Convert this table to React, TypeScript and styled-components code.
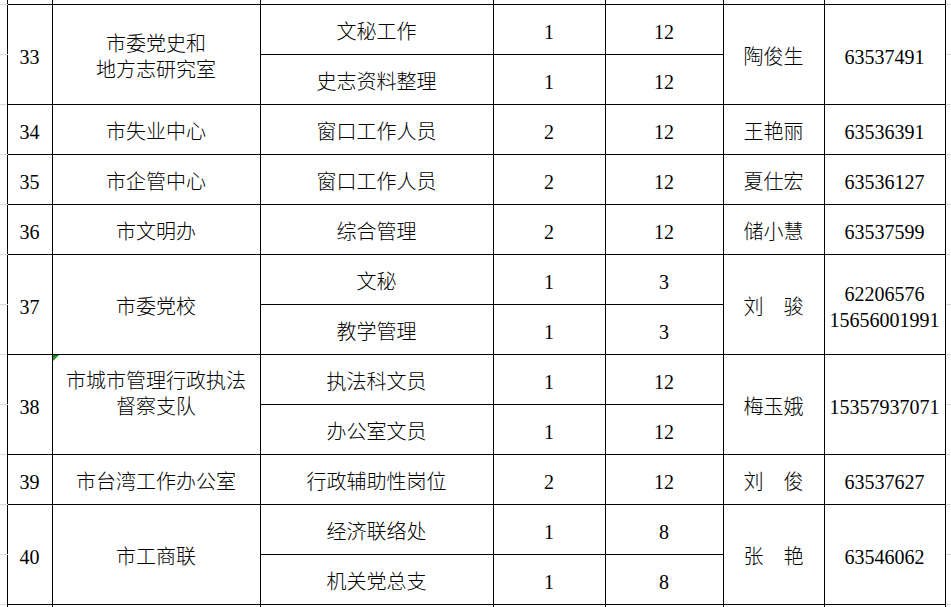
import { Fragment } from "react";
import styled, { createGlobalStyle } from "styled-components";

const GlobalStyle = createGlobalStyle`
  html, body {
    margin: 0;
    padding: 0;
    background: #fff;
    overflow: hidden;
  }
`;

const Sheet = styled.div`
  width: 951px;
  height: 607px;
  overflow: hidden;
  background: #fff;
`;

const Table = styled.table`
  border-collapse: collapse;
  table-layout: fixed;
  width: 960px;
  margin-top: -46px;
  font-family: "Liberation Serif", "Noto Sans CJK SC", serif;
  font-size: 20px;
  font-weight: 300;
  color: #000;
`;

const Row = styled.tr`
  height: 50px;
`;

const Cell = styled.td`
  position: relative;
  border: 1px solid #000;
  padding: 4px 0 0;
  text-align: center;
  vertical-align: middle;
  white-space: nowrap;
  line-height: 26px;
  height: 49px;
  box-sizing: border-box;
`;

const GridCell = styled.td`
  border-bottom: 1px solid #d9d9d9;
  padding: 0;
`;

const Flag = styled.span`
  position: absolute;
  left: 0;
  top: 0;
  width: 0;
  height: 0;
  border-top: 6px solid #1e8c1e;
  border-right: 6px solid transparent;
`;

const Line = styled.div`
  display: block;
  min-height: 26px;
`;

type Job = [string, number, number];

type Group = {
  no: string;
  unit: string[];
  jobs: Job[];
  contact: string;
  phone: string[];
  flag?: boolean;
};

const groups: Group[] = [
  {
    no: "33",
    unit: ["市委党史和", "地方志研究室"],
    jobs: [
      ["文秘工作", 1, 12],
      ["史志资料整理", 1, 12],
    ],
    contact: "陶俊生",
    phone: ["63537491"],
  },
  { no: "34", unit: ["市失业中心"], jobs: [["窗口工作人员", 2, 12]], contact: "王艳丽", phone: ["63536391"] },
  { no: "35", unit: ["市企管中心"], jobs: [["窗口工作人员", 2, 12]], contact: "夏仕宏", phone: ["63536127"] },
  { no: "36", unit: ["市文明办"], jobs: [["综合管理", 2, 12]], contact: "储小慧", phone: ["63537599"] },
  {
    no: "37",
    unit: ["市委党校"],
    jobs: [
      ["文秘", 1, 3],
      ["教学管理", 1, 3],
    ],
    contact: "刘　骏",
    phone: ["62206576", "15656001991"],
  },
  {
    no: "38",
    // the source cell ends with a blank line, which pushes its text up
    unit: ["市城市管理行政执法", "督察支队", ""],
    jobs: [
      ["执法科文员", 1, 12],
      ["办公室文员", 1, 12],
    ],
    contact: "梅玉娥",
    phone: ["15357937071"],
    flag: true,
  },
  { no: "39", unit: ["市台湾工作办公室"], jobs: [["行政辅助性岗位", 2, 12]], contact: "刘　俊", phone: ["63537627"] },
  {
    no: "40",
    unit: ["市工商联"],
    jobs: [
      ["经济联络处", 1, 8],
      ["机关党总支", 1, 8],
    ],
    contact: "张　艳",
    phone: ["63546062"],
  },
];

const widths = [7, 45, 208, 233, 112, 118, 101, 121, 15];

function EmptyRow() {
  return (
    <Row>
      <GridCell />
      {Array.from({ length: 7 }).map((_, i) => (
        <Cell key={i} />
      ))}
      <GridCell />
    </Row>
  );
}

export default function App() {
  return (
    <Sheet>
      <GlobalStyle />
      <Table>
        <colgroup>
          {widths.map((w, i) => (
            <col key={i} style={{ width: w }} />
          ))}
        </colgroup>
        <tbody>
          <EmptyRow />
          {groups.map((g) => (
            <Fragment key={g.no}>
              {g.jobs.map((job, j) => (
                <Row key={j}>
                  <GridCell />
                  {j === 0 && (
                    <>
                      <Cell rowSpan={g.jobs.length}>{g.no}</Cell>
                      <Cell rowSpan={g.jobs.length}>
                        {g.flag && <Flag />}
                        {g.unit.map((u, k) => (
                          <Line key={k}>{u}</Line>
                        ))}
                      </Cell>
                    </>
                  )}
                  <Cell>{job[0]}</Cell>
                  <Cell>{job[1]}</Cell>
                  <Cell>{job[2]}</Cell>
                  {j === 0 && (
                    <>
                      <Cell rowSpan={g.jobs.length}>{g.contact}</Cell>
                      <Cell rowSpan={g.jobs.length}>
                        {g.phone.map((p) => (
                          <Line key={p}>{p}</Line>
                        ))}
                      </Cell>
                    </>
                  )}
                  <GridCell />
                </Row>
              ))}
            </Fragment>
          ))}
          <EmptyRow />
        </tbody>
      </Table>
    </Sheet>
  );
}
